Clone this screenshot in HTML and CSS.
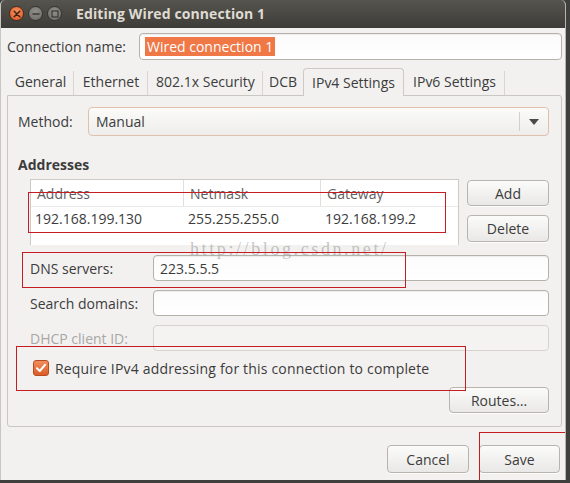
FILE: index.html
```html
<!DOCTYPE html>
<html>
<head>
<meta charset="utf-8">
<link rel="stylesheet" href="styles.css">
</head>
<body>
<div class="window">
  <div class="titlebar">
    <div class="wbtns">
      <span class="wbtn close"><svg width="8" height="8" viewBox="0 0 8 8"><path d="M1.2 1.2L6.8 6.8M6.8 1.2L1.2 6.8" stroke="#3a2418" stroke-width="1.5" stroke-linecap="round"/></svg></span>
      <span class="wbtn"><svg width="8" height="8" viewBox="0 0 8 8"><path d="M0.5 4H7.5" stroke="#3b3a36" stroke-width="1.5"/></svg></span>
      <span class="wbtn"><svg width="8" height="8" viewBox="0 0 8 8"><rect x="1" y="1" width="6" height="6" fill="none" stroke="#3b3a36" stroke-width="1.2"/></svg></span>
    </div>
    <div class="title">Editing Wired connection 1</div>
  </div>

  <div class="body">
    <div class="namerow">
      <label class="namelabel">Connection name:</label>
      <div class="entry name"><span class="sel">Wired connection 1</span></div>
    </div>

    <div class="tabs">
      <div class="tab t1"><span>General</span></div>
      <div class="tab t2"><span>Ethernet</span></div>
      <div class="tab t3"><span>802.1x Security</span></div>
      <div class="tab t4"><span>DCB</span></div>
      <div class="tab active t5"><span>IPv4 Settings</span></div>
      <div class="tab t6"><span>IPv6 Settings</span></div>
    </div>

    <div class="panel">
      <div class="methodrow">
        <span class="methodlabel">Method:</span>
        <div class="combo"><span class="combotext">Manual</span><span class="combosep"></span><span class="arrow"></span></div>
      </div>

      <div class="heading">Addresses</div>

      <div class="addrrow">
        <div class="table">
          <div class="thead">
            <div class="c1">Address</div>
            <div class="c2">Netmask</div>
            <div class="c3">Gateway</div>
          </div>
          <div class="trow">
            <div class="c1">192.168.199.130</div>
            <div class="c2">255.255.255.0</div>
            <div class="c3">192.168.199.2</div>
          </div>
        </div>
        <div class="sidebtns">
          <div class="btn addbtn">Add</div>
          <div class="btn delbtn">Delete</div>
        </div>
      </div>

      <div class="formrow dns">
        <span class="flabel">DNS servers:</span>
        <div class="entry field"><span class="val">223.5.5.5</span></div>
      </div>
      <div class="formrow">
        <span class="flabel">Search domains:</span>
        <div class="entry field"></div>
      </div>
      <div class="formrow">
        <span class="flabel disabled">DHCP client ID:</span>
        <div class="entry field dis"></div>
      </div>

      <div class="checkrow">
        <span class="check"><svg width="12" height="12" viewBox="0 0 12 12"><path d="M2 6.3L4.8 9L10 2.8" fill="none" stroke="#fff" stroke-width="2" stroke-linecap="round" stroke-linejoin="round"/></svg></span>
        <span class="checklabel">Require IPv4 addressing for this connection to complete</span>
      </div>

      <div class="routesrow">
        <div class="btn routes">Routes…</div>
      </div>
    </div>

    <div class="dialogbtns">
      <div class="btn cancel">Cancel</div>
      <div class="btn save">Save</div>
    </div>
  </div>

  <div class="watermark">http://blog.csdn.net/</div>
  <div class="mark m1"></div>
  <div class="mark m2"></div>
  <div class="mark m3"></div>
  <div class="mark m4"></div>
</div>
</body>
</html>
```

FILE: styles.css
```css
* { box-sizing: border-box; }
html, body {
  margin: 0;
  padding: 0;
  width: 570px;
  height: 483px;
  overflow: hidden;
  background: #3f3f3d;
}
body {
  font-family: "Open Sans", "Noto Sans", sans-serif;
  font-size: 14px;
  color: #3c3c3c;
}
.window {
  position: relative;
  width: 566px;
  height: 480px;
  background: #f2f1f0;
  border-left: 1px solid #c9c6c2;
  border-right: 1px solid #b8b5b0;
  border-radius: 5px 5px 0 0;
  overflow: hidden;
  display: flex;
  flex-direction: column;
}
.titlebar {
  height: 28px;
  flex: none;
  background: linear-gradient(#55544e, #3d3c38);
  display: flex;
  align-items: center;
  padding-left: 8px;
  padding-bottom: 1px;
}
.wbtns { display: flex; gap: 4px; align-items: center; }
.wbtn {
  width: 15px;
  height: 15px;
  border-radius: 50%;
  background: radial-gradient(circle at 50% 35%, #8f8e88, #6d6c67);
  border: 1px solid #35342f;
  display: flex;
  align-items: center;
  justify-content: center;
}
.wbtn.close { background: radial-gradient(circle at 50% 35%, #f78e5c, #df5a22); border-color: #4a2a1a; }
.title {
  margin-left: 14px;
  color: #dfdbd2;
  font-weight: 700;
  font-size: 14px;
  letter-spacing: 0.1px;
}
.body {
  flex: 1;
  display: flex;
  flex-direction: column;
  padding: 5px 3px 0 6px;
}
.namerow { display: flex; align-items: center; height: 27px; }
.namelabel { width: 132px; flex: none; }
.entry {
  border: 1px solid #b6b1ab;
  border-radius: 4px;
  background: linear-gradient(#fbfbfb, #ffffff);
  box-shadow: inset 0 1px 1px rgba(0,0,0,0.06);
  display: flex;
  align-items: center;
}
.name { flex: 1; height: 27px; padding-left: 5px; }
.sel {
  background: #f07746;
  color: #ffffff;
  padding: 0 2px;
  line-height: 19px;
}
.tabs { display: flex; margin-top: 8px; height: 27px; position: relative; z-index: 1; }
.tab {
  height: 27px;
  display: flex;
  align-items: center;
  justify-content: center;
  position: relative;
}
.tab::after {
  content: "";
  position: absolute;
  right: 0;
  top: 3px;
  bottom: 0;
  width: 1px;
  background: #d9d6d2;
}
.tab.t4::after, .tab.active::after { display: none; }
.t1 { width: 67px; }
.t2 { width: 74px; }
.t3 { width: 115px; }
.t4 { width: 40px; }
.t5 { width: 101px; }
.t6 { width: 101px; }
.tab.active {
  border: 1px solid #cdc9c4;
  border-bottom: none;
  border-radius: 4px 4px 0 0;
  background: #f2f1f0;
  height: 28px;
}
.panel {
  border: 1px solid #cac7c3;
  border-radius: 0 3px 3px 3px;
  height: 332px;
  padding: 11px 12px 0 10px;
  display: flex;
  flex-direction: column;
}
.methodrow { display: flex; align-items: center; height: 29px; }
.methodlabel { width: 70px; flex: none; }
.combo {
  flex: 1;
  height: 29px;
  border: 1px solid #e0c0ad;
  border-radius: 4px;
  background: linear-gradient(#fbfbfa, #eeedeb);
  display: flex;
  align-items: center;
  padding-left: 7px;
}
.combotext { flex: 1; }
.combosep { width: 1px; height: 19px; background: #d3cfcb; }
.arrow {
  width: 0; height: 0;
  margin: 0 9px 0 9px;
  border-left: 5px solid transparent;
  border-right: 5px solid transparent;
  border-top: 6px solid #4a4a4a;
}
.heading { font-weight: 700; margin-top: 20px; height: 18px; line-height: 18px; }
.addrrow { display: flex; margin-top: 5px; height: 66px; padding-left: 12px; }
.table {
  width: 429px;
  height: 66px;
  background: #ffffff;
  border: 1px solid #cdc9c4;
  border-bottom: none;
}
.thead, .trow { display: flex; }
.thead { height: 27px; color: #5e5e5e; border-bottom: 1px solid #ebe9e6; }
.thead > div { display: flex; align-items: center; padding-left: 6px; border-right: 1px solid #e2dfdb; }
.thead > div.c3 { border-right: none; }
.trow { height: 22px; }
.trow > div { display: flex; align-items: center; padding-left: 4px; }
.c1 { width: 153px; }
.c2 { width: 137px; }
.c3 { flex: 1; }
.sidebtns { margin-left: 8px; display: flex; flex-direction: column; gap: 9px; padding-top: 1px; }
.btn {
  border: 1px solid #b9b4ae;
  border-radius: 4px;
  background: linear-gradient(#fbfbfa, #e9e8e6);
  box-shadow: 0 1px 0 rgba(255,255,255,0.8);
  display: flex;
  align-items: center;
  justify-content: center;
}
.addbtn, .delbtn { width: 82px; height: 26px; }
.delbtn { height: 27px; }
.formrow { display: flex; align-items: center; height: 26px; margin-top: 9px; padding-left: 12px; }
.formrow.dns { margin-top: 10px; }
.flabel { width: 123px; flex: none; }
.flabel.disabled { color: #a9a7a4; }
.field { flex: 1; height: 26px; padding-left: 6px; }
.field.dis { border-color: #d6d3cf; background: #f4f3f2; box-shadow: none; }
.checkrow { display: flex; align-items: center; margin-top: 9px; height: 16px; padding-left: 15px; }
.check {
  width: 16px; height: 16px;
  border-radius: 3px;
  background: linear-gradient(#f28e5e, #dc5c24);
  border: 1px solid #b44c1f;
  display: flex; align-items: center; justify-content: center;
}
.checklabel { margin-left: 6px; letter-spacing: 0.18px; }
.routesrow { display: flex; justify-content: flex-end; margin-top: 11px; }
.routes { width: 100px; height: 26px; }
.dialogbtns { display: flex; justify-content: flex-end; gap: 10px; margin-top: 18px; padding-right: 2px; }
.cancel { width: 82px; height: 28px; }
.save { width: 81px; height: 28px; }
.watermark {
  position: absolute;
  left: 189px;
  top: 239px;
  font-family: "Liberation Serif", "DejaVu Serif", serif;
  font-size: 18px;
  letter-spacing: 2.6px;
  color: rgba(150,150,150,0.55);
  pointer-events: none;
}
.mark { position: absolute; border: 1px solid #c41e24; pointer-events: none; }
.m1 { left: 27px; top: 192px; width: 418px; height: 41px; }
.m2 { left: 21px; top: 252px; width: 384px; height: 36px; }
.m3 { left: 15px; top: 346px; width: 450px; height: 45px; }
.m4 { left: 478px; top: 432px; width: 100px; height: 60px; }
```
